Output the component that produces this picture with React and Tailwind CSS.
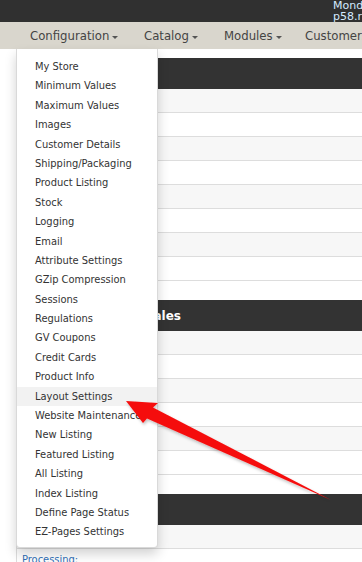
import React from 'react';

const menuItems = [
  'My Store',
  'Minimum Values',
  'Maximum Values',
  'Images',
  'Customer Details',
  'Shipping/Packaging',
  'Product Listing',
  'Stock',
  'Logging',
  'Email',
  'Attribute Settings',
  'GZip Compression',
  'Sessions',
  'Regulations',
  'GV Coupons',
  'Credit Cards',
  'Product Info',
  'Layout Settings',
  'Website Maintenance',
  'New Listing',
  'Featured Listing',
  'All Listing',
  'Index Listing',
  'Define Page Status',
  'EZ-Pages Settings',
];

const navItems = [
  { label: 'Configuration', w: 'w-[114px]' },
  { label: 'Catalog', w: 'w-[80px]' },
  { label: 'Modules', w: 'w-[81px]' },
  { label: 'Customers', w: 'w-[120px]' },
];

const condensed = { fontFamily: '"DejaVu Sans Condensed", "Liberation Sans", sans-serif' };

const Caret = () => (
  <span className="ml-[3px] mt-[2px] inline-block w-0 h-0 border-l-[3px] border-r-[3px] border-t-[3px] border-l-transparent border-r-transparent border-t-[#555]" />
);

const Panel = ({ title, rows, right }) => (
  <div>
    <div className="h-[31px] bg-[#333333] text-white font-bold text-[12px] flex items-center pl-[8px]">
      <span className={`whitespace-nowrap ${right ? 'w-[157px] text-right' : ''}`}>{title}</span>
    </div>
    {Array.from({ length: rows }).map((_, i) => (
      <div
        key={i}
        className={`h-6 border-b border-l border-[#dddddd] ${i % 2 === 0 ? 'bg-[#f7f7f7]' : 'bg-white'}`}
      />
    ))}
  </div>
);

export default function App() {
  return (
    <div
      className="relative w-[362px] h-[562px] overflow-hidden bg-white"
      style={{ fontFamily: '"DejaVu Sans", Verdana, sans-serif' }}
    >
      {/* Top bar */}
      <div className="h-[22px] bg-[#303030] pl-[333px] text-[11px] leading-[11px] text-[#d4eaff] whitespace-nowrap">
        <div>Monday, 12 Jan</div>
        <div>p58.ru</div>
      </div>

      {/* Nav */}
      <div
        className="h-[27px] bg-[#d9d6cd] flex items-center pl-[30px] pt-[1px] whitespace-nowrap text-[13px] text-[#444]"
        style={condensed}
      >
        {navItems.map((n) => (
          <div key={n.label} className={`${n.w} shrink-0 flex items-center`}>
            <span>{n.label}</span>
            <Caret />
          </div>
        ))}
      </div>

      {/* Page content */}
      <div className="ml-[16px] mt-[9px] flex flex-col gap-[20px]">
        <Panel title="Statistics" rows={8} />
        <div className="-mt-[1px]">
          <Panel title="Orders & Sales" rows={6} right />
        </div>
        <div className="-mt-[1px]">
          <Panel title="Orders" rows={1} />
          <div className="border-l border-[#dddddd] pl-[5px] pt-[3px] text-[11px] text-[#2f6fb7]" style={condensed}>
            Processing:
          </div>
        </div>
      </div>

      {/* Dropdown menu */}
      <div
        className="absolute left-[16px] top-[49px] w-[142px] bg-white border border-[rgba(0,0,0,0.15)] border-t-0 rounded-b-[4px] shadow-[0_6px_12px_rgba(0,0,0,0.18)] pt-[8px] pb-[5px] text-[11px] text-[#333]"
        style={condensed}
      >
        {menuItems.map((item) => (
          <div
            key={item}
            className={`h-[19.4px] leading-[19.4px] pl-[18px] whitespace-nowrap ${item === 'Layout Settings' ? 'bg-[#f2f2f2]' : ''}`}
          >
            {item}
          </div>
        ))}
      </div>

      {/* Red arrow */}
      <svg className="absolute inset-0 pointer-events-none" width="362" height="562" viewBox="0 0 362 562">
        <defs>
          <filter id="sh" x="-20%" y="-20%" width="140%" height="140%">
            <feDropShadow dx="1" dy="2" stdDeviation="1.5" floodColor="#000" floodOpacity="0.25" />
          </filter>
        </defs>
        <polygon
          points="126,401 158,403 153,407.5 331,500 147,418.5 143,423"
          fill="#f50f0f"
          filter="url(#sh)"
        />
      </svg>
    </div>
  );
}
